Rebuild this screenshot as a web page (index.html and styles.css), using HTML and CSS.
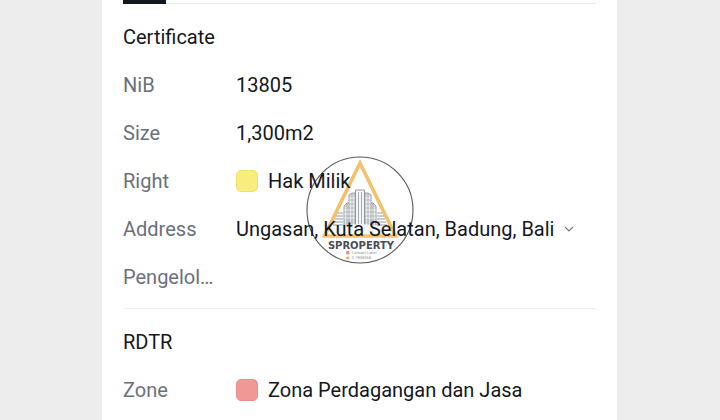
FILE: index.html
```html
<!DOCTYPE html>
<html lang="en">
  <head>
    <meta charset="utf-8">
    <title>Certificate</title>

    <link rel="stylesheet" href="styles.css">
  </head>
  <body>
    <main class="card">
      <div class="tab-line">
        <div class="active-tab"></div>
      </div>

      <section class="section">
        <h2 class="section-title">Certificate</h2>
        <dl class="details">
          <dt>NiB</dt>
          <dd>13805</dd>
          <dt>Size</dt>
          <dd>1,300m2</dd>
          <dt>Right</dt>
          <dd><span class="swatch swatch-yellow"></span>Hak Milik</dd>
          <dt>Address</dt>
          <dd>
            Ungasan, Kuta Selatan, Badung, Bali
            <button class="expand-button" aria-label="Show full address">
              <svg width="10" height="6" viewBox="0 0 10 6">
                <path d="M1 1 L5 5 L9 1" fill="none" stroke="#74777f" stroke-width="1.1"/>
              </svg>
            </button>
          </dd>
          <dt>Pengelol…</dt>
          <dd></dd>
        </dl>
      </section>

      <section class="section">
        <h2 class="section-title">RDTR</h2>
        <dl class="details">
          <dt>Zone</dt>
          <dd><span class="swatch swatch-red"></span>Zona Perdagangan dan Jasa</dd>
        </dl>
      </section>

      <svg class="watermark" viewBox="0 0 108 108">
        <circle cx="54" cy="54" r="53" fill="none" stroke="#55575b" stroke-width="1.1"/>

        <!-- towers -->
        <g fill="#dfe2e5" stroke="#81878d" stroke-width="0.8">
          <path d="M38 75 V50 L41 47 H44 V75 Z"/>
          <path d="M70 75 V50 L67 47 H64 V75 Z"/>
          <path d="M43 75 V39 L46 37 H49 V75 Z"/>
          <path d="M65 75 V39 L62 37 H59 V75 Z"/>
          <path d="M49.500 75 V34 H58.500 V75 Z" fill="#f3f4f5"/>
        </g>
        <g fill="none" stroke="#777d84" stroke-width="0.6">
          <path d="M41 48 V75 M46 38 V75 M52.500 36 V75 M55.500 36 V75 M62 38 V75 M67 48 V75"/>
        </g>
        <g fill="none" stroke="#f5f6f7" stroke-width="0.8">
          <path d="M43 42 H49 M43 46 H49 M43 50 H49 M43 54 H49 M43 58 H49 M43 62 H49"/>
          <path d="M59 42 H65 M59 46 H65 M59 50 H65 M59 54 H65 M59 58 H65 M59 62 H65"/>
          <path d="M38 54 H43 M38 58 H43 M38 62 H43 M65 54 H70 M65 58 H70 M65 62 H70"/>
        </g>
        <g fill="none" stroke="#969ba0" stroke-width="1.2">
          <path d="M31 57 H37 M30 60 H37 M29 63 H37 M28 66 H37 M27 69 H37"/>
          <path d="M71 57 H77 M71 60 H78 M71 63 H79 M71 66 H80 M71 69 H81"/>
        </g>
        <path d="M24 78 V74 Q54 62 84 74 V78 Z" fill="#f6f7f8"/>

        <path class="watermark-triangle" d="M54 7 L18.500 80 H89.500 Z" fill="none" stroke="#f3b552" stroke-width="3.6"/>

        <text class="watermark-name" x="55" y="93" text-anchor="middle">SPROPERTY</text>
        <rect x="40" y="95" width="3.500" height="3.500" rx="1" fill="#dc9a86"/>
        <circle cx="41.700" cy="102" r="1.800" fill="#e3b585"/>
        <text class="watermark-contact" x="46" y="98">Contact Label</text>
        <text class="watermark-contact" x="46" y="103">0 7858368</text>
      </svg>
    </main>
  </body>
</html>
```

FILE: styles.css
```css
body {
  margin: 0;
  padding: 0 103px 0 102px;
  background-color: rgb(237, 237, 237);
  color: rgb(20, 23, 31);
  font-family: Roboto, "Liberation Sans", sans-serif;
  font-size: 20px;
  line-height: 24px;
}

.card {
  position: relative;
  z-index: 0;
  min-height: 100vh;
  padding: 0 21px;
  box-sizing: border-box;
  background-color: white;
}

.tab-line {
  height: 3px;
  border-bottom: 1px solid rgb(232, 232, 232);
}

.active-tab {
  width: 43px;
  height: 4px;
  background-color: rgb(18, 24, 29);
}

.section {
  padding: 9px 0 7px;
}

.section + .section {
  border-top: 1px solid rgb(239, 239, 239);
}

.section-title {
  display: flex;
  align-items: center;
  height: 48px;
  margin: 0;
  font-size: 20px;
  font-weight: 400;
}

.details {
  display: grid;
  grid-template-columns: 113px 1fr;
  grid-auto-rows: 48px;
  align-items: center;
  margin: 0;
}

dt {
  color: rgb(107, 112, 124);
}

dd {
  display: flex;
  align-items: center;
  margin: 0;
  white-space: nowrap;
}

.swatch {
  width: 22px;
  height: 22px;
  box-sizing: border-box;
  margin-right: 10px;
  border-radius: 5px;
}

.swatch-yellow {
  background-color: rgb(249, 237, 126);
  border: 1px solid rgb(239, 224, 112);
}

.swatch-red {
  background-color: rgb(239, 152, 150);
  border: 1px solid rgb(232, 143, 141);
}

.expand-button {
  display: flex;
  margin-left: 10px;
  padding: 0;
  border: none;
  background-color: transparent;
  cursor: pointer;
}

.watermark {
  position: absolute;
  z-index: -1;
  top: 156px;
  left: 50%;
  width: 108px;
  height: 108px;
  margin-left: -54px;
  pointer-events: none;
}

.watermark-triangle {
  opacity: 0.85;
}

.watermark-name {
  fill: rgb(75, 77, 82);
  font-family: "DejaVu Sans", sans-serif;
  font-size: 10px;
  font-weight: bold;
}

.watermark-contact {
  fill: rgb(150, 150, 150);
  font-size: 4px;
}
```
